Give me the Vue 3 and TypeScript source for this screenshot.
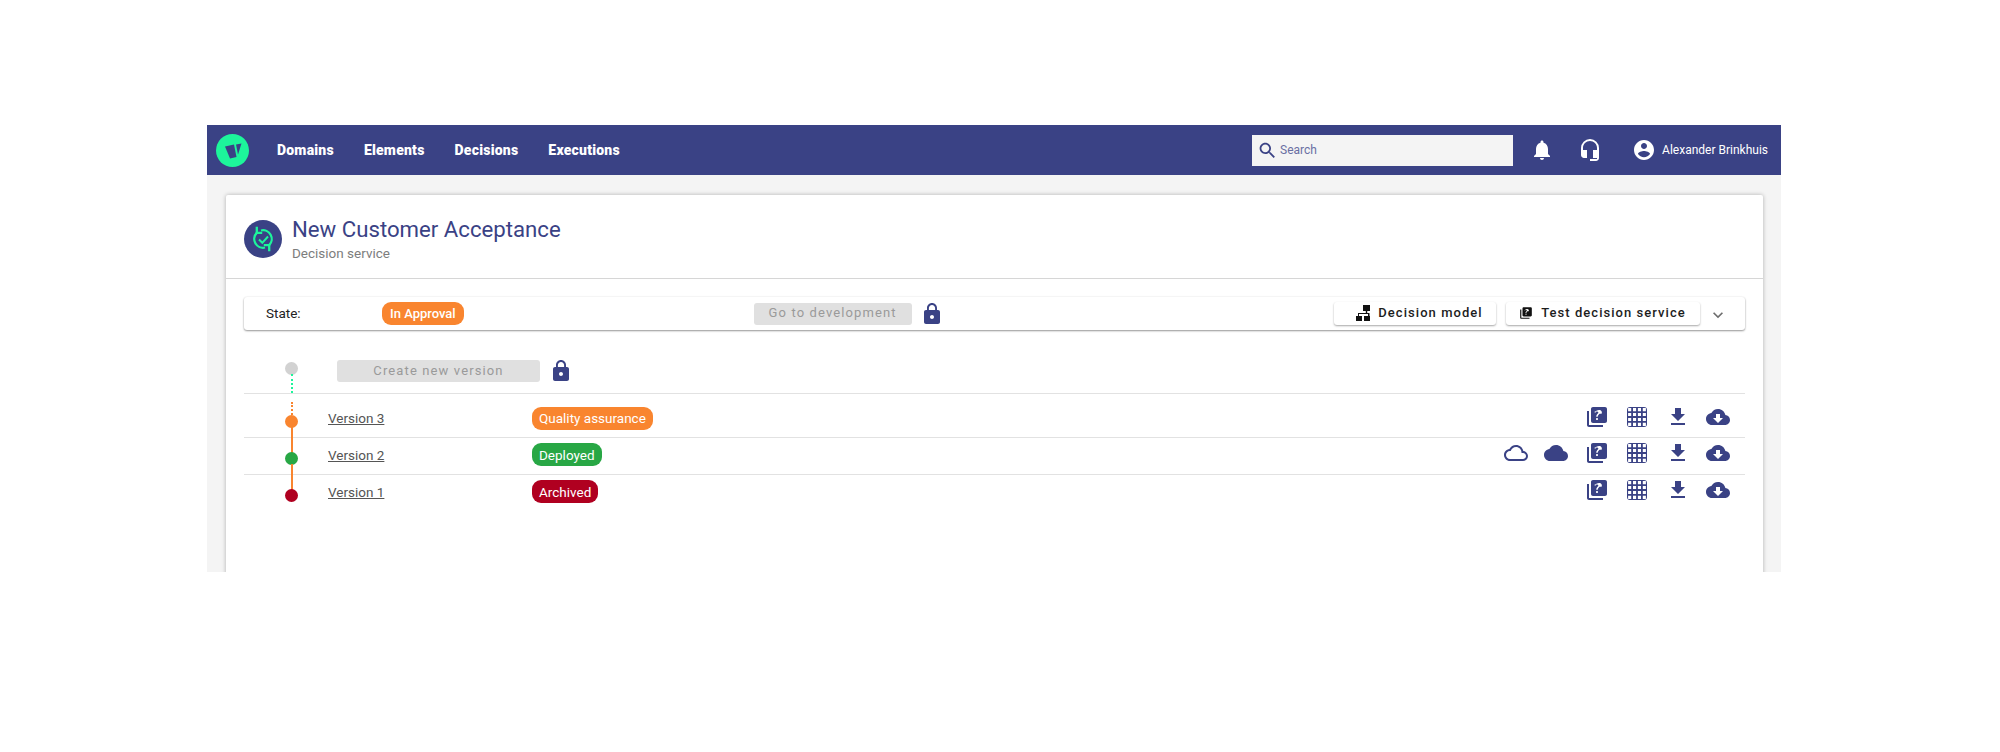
<script setup lang="ts">
const navItems: string[] = ['Domains', 'Elements', 'Decisions', 'Executions']

// outer rounded square with 4x4 cells cut out
function buildGrid(): string {
  let d = 'M5 2h14a3 3 0 0 1 3 3v14a3 3 0 0 1-3 3H5a3 3 0 0 1-3-3V5a3 3 0 0 1 3-3z'
  for (let row = 0; row < 4; row++) {
    for (let col = 0; col < 4; col++) {
      const x = 3.1 + col * 4.9
      const y = 3.1 + row * 4.9
      d += `M${x} ${y}h3.100v3.100h-3.100z`
    }
  }
  return d
}

const paths = {
  quiz: 'M4 6H2v14c0 1.1.9 2 2 2h14v-2H4V6zm16-4H8c-1.1 0-2 .9-2 2v12c0 1.1.9 2 2 2h12c1.1 0 2-.9 2-2V4c0-1.1-.9-2-2-2zm-7.990 13c-.59 0-1.050-.47-1.050-1.050 0-.59.47-1.040 1.050-1.040.59 0 1.040.45 1.040 1.040-.01.58-.45 1.050-1.040 1.050zm2.500-6.170c-.63.93-1.230 1.210-1.560 1.810-.13.24-.18.4-.18 1.180h-1.520c0-.41-.06-1.080.26-1.650.41-.73 1.180-1.160 1.630-1.800.48-.68.21-1.940-1.140-1.940-.88 0-1.320.67-1.500 1.230l-1.370-.57C11.510 5.960 12.520 5 13.990 5c1.230 0 2.080.56 2.510 1.260.37.61.58 1.730.01 2.570z',
  grid: buildGrid(),
  download: 'M19 9h-4V3H9v6H5l7 7 7-7zM5 18v2h14v-2H5z',
  cloudDownload: 'M19.350 10.040C18.670 6.590 15.640 4 12 4 9.110 4 6.600 5.640 5.350 8.040 2.340 8.360 0 10.910 0 14c0 3.310 2.690 6 6 6h13c2.760 0 5-2.240 5-5 0-2.640-2.050-4.780-4.650-4.960zM17 13l-5 5-5-5h3V9h4v4h3z',
  cloud: 'M19.350 10.040C18.670 6.590 15.640 4 12 4 9.110 4 6.600 5.640 5.350 8.040 2.340 8.360 0 10.910 0 14c0 3.310 2.690 6 6 6h13c2.760 0 5-2.240 5-5 0-2.640-2.050-4.780-4.650-4.960z',
  cloudOutline: 'M19.350 10.040C18.670 6.590 15.640 4 12 4 9.110 4 6.600 5.640 5.350 8.040 2.340 8.360 0 10.910 0 14c0 3.310 2.690 6 6 6h13c2.760 0 5-2.240 5-5 0-2.640-2.050-4.780-4.650-4.960zM19 18H6c-2.210 0-4-1.790-4-4s1.790-4 4-4h.71C7.370 7.690 9.480 6 12 6c3.040 0 5.500 2.460 5.500 5.500v.5H19c1.660 0 3 1.340 3 3s-1.340 3-3 3z'
}

const lockPath = 'M18 8h-1V6c0-2.760-2.240-5-5-5S7 3.240 7 6v2H6c-1.100 0-2 .9-2 2v10c0 1.100.9 2 2 2h12c1.100 0 2-.9 2-2V10c0-1.100-.9-2-2-2zm-6 9c-1.100 0-2-.9-2-2s.9-2 2-2 2 .9 2 2-.9 2-2 2zm3.100-9H8.900V6c0-1.710 1.390-3.100 3.100-3.100 1.710 0 3.100 1.390 3.100 3.100v2z'

interface Version {
  name: string
  status: string
  colour: string
  icons: (keyof typeof paths)[]
  cls: string
}

const versions: Version[] = [
  { name: 'Version 3', status: 'Quality assurance', colour: '#f9852f', icons: ['quiz', 'grid', 'download', 'cloudDownload'], cls: 'is-latest' },
  { name: 'Version 2', status: 'Deployed', colour: '#28a745', icons: ['cloudOutline', 'cloud', 'quiz', 'grid', 'download', 'cloudDownload'], cls: 'is-middle' },
  { name: 'Version 1', status: 'Archived', colour: '#b00020', icons: ['quiz', 'grid', 'download', 'cloudDownload'], cls: 'is-first' }
]
</script>

<template>
  <div class="page">
    <div class="frame">
      <header class="topbar">
        <svg class="logo" viewBox="0 0 33 33">
          <circle cx="16.500" cy="16.500" r="16.500" fill="#1df59b" />
          <polygon points="9,12.500 18,10.500 20.500,23 14,24.500" fill="#3a4285" />
          <polygon points="20,10.500 25.500,9.500 22,20.500" fill="#3a4285" />
        </svg>
        <nav class="nav">
          <a v-for="item in navItems" :key="item" class="nav-item">{{ item }}</a>
        </nav>
        <div class="search">
          <svg class="search-icon" viewBox="0 0 24 24"><path d="M15.500 14h-.79l-.28-.27C15.410 12.590 16 11.110 16 9.500 16 5.910 13.090 3 9.500 3S3 5.910 3 9.500 5.910 16 9.500 16c1.610 0 3.090-.59 4.230-1.570l.27.28v.79l5 4.990L20.490 19l-4.990-5zm-6 0C7.010 14 5 11.990 5 9.500S7.010 5 9.500 5 14 7.010 14 9.500 11.990 14 9.500 14z" /></svg>
          <span class="search-text">Search</span>
        </div>
        <svg class="bar-icon bell" viewBox="0 0 24 24"><path d="M12 22c1.100 0 2-.9 2-2h-4c0 1.100.89 2 2 2zm6-6v-5c0-3.070-1.640-5.640-4.500-6.320V4c0-.83-.67-1.500-1.500-1.500s-1.500.67-1.500 1.500v.68C7.630 5.360 6 7.920 6 11v5l-2 2v1h16v-1l-2-2z" /></svg>
        <svg class="bar-icon headset" viewBox="0 0 24 24"><path d="M12 1a9 9 0 0 0-9 9v7c0 1.660 1.340 3 3 3h3v-8H5v-2c0-3.870 3.130-7 7-7s7 3.130 7 7v2h-4v8h4v1h-7v2h6c1.660 0 3-1.340 3-3V10a9 9 0 0 0-9-9z" /></svg>
        <svg class="bar-icon account" viewBox="0 0 24 24"><path d="M12 2C6.480 2 2 6.480 2 12s4.480 10 10 10 10-4.480 10-10S17.520 2 12 2zm0 3c1.660 0 3 1.340 3 3s-1.340 3-3 3-3-1.340-3-3 1.340-3 3-3zm0 14.200c-2.500 0-4.710-1.280-6-3.220.03-1.990 4-3.080 6-3.080 1.990 0 5.970 1.090 6 3.080-1.290 1.940-3.500 3.220-6 3.220z" /></svg>
        <span class="user-name">Alexander Brinkhuis</span>
      </header>

      <main class="card">
        <div class="card-head">
          <svg class="service-icon" viewBox="0 0 38 38">
            <circle cx="19" cy="19" r="19" fill="#3a4285" />
            <g fill="none" stroke="#1df59b" stroke-width="2.300">
              <path d="M12.800 12.900A8.700 8.700 0 0 0 21 27.500" />
              <path d="M25.200 25.100A8.700 8.700 0 0 0 17 10.500" />
              <path d="M12.800 6.800v6h5.400" />
              <path d="M25.200 31.200v-6h-5.400" />
              <path d="M15 19.500l3.300 3.300 5.700-6.300" stroke-width="2" />
            </g>
          </svg>
          <div>
            <h1 class="title">New Customer Acceptance</h1>
            <div class="subtitle">Decision service</div>
          </div>
        </div>

        <div class="body">
          <section class="state-bar">
            <span class="state-label">State:</span>
            <span class="pill state-pill">In Approval</span>
            <button class="btn-disabled go-dev" disabled>Go to development</button>
            <svg class="lock" viewBox="0 0 24 24"><path :d="lockPath" /></svg>
            <div class="state-actions">
              <button class="btn-action model">
                <svg class="model-icon" viewBox="0 0 14 16"><path d="M7 0h7v6h-2.800v2H14v0h-.5v3H14v5H8v-5h4V9H3v2h3v5H0v-5h2V8h7.800V6H7z" /></svg>
                Decision model
              </button>
              <button class="btn-action test">
                <svg class="btn-icon" viewBox="0 0 24 24"><path :d="paths.quiz" /></svg>
                Test decision service
              </button>
              <svg class="chevron" viewBox="0 0 24 24"><path d="M16.590 8.590L12 13.170 7.410 8.590 6 10l6 6 6-6z" /></svg>
            </div>
          </section>

          <div class="row create-row">
            <div class="dot-cell"><span class="dot dot-new"></span></div>
            <button class="btn-disabled create" disabled>Create new version</button>
            <svg class="lock" viewBox="0 0 24 24"><path :d="lockPath" /></svg>
          </div>

          <div v-for="v in versions" :key="v.name" class="row" :class="v.cls">
            <div class="dot-cell"><span class="dot" :style="{ background: v.colour }"></span></div>
            <a class="version-link">{{ v.name }}</a>
            <span class="pill" :style="{ background: v.colour }">{{ v.status }}</span>
            <div class="row-icons">
              <svg v-for="icon in v.icons" :key="icon" class="row-icon" viewBox="0 0 24 24"><path :d="paths[icon]" fill-rule="evenodd" /></svg>
            </div>
          </div>
        </div>
      </main>
    </div>
  </div>
</template>

<style>
html, body {
  margin: 0;
  background: #fff;
}
</style>

<style scoped>
.page {
  width: 2000px;
  height: 752px;
  padding: 125px 0 0 207px;
  box-sizing: border-box;
  font-family: Roboto, "Liberation Sans", sans-serif;
  overflow: hidden;
}

.frame {
  width: 1574px;
  height: 447px;
  background: #f4f4f4;
  display: flex;
  flex-direction: column;
  overflow: hidden;
}

.topbar {
  height: 50px;
  flex: none;
  background: #3a4285;
  display: flex;
  align-items: center;
  color: #fff;
}

.logo {
  width: 33px;
  height: 33px;
  margin-left: 9px;
}

.nav {
  display: flex;
  margin-left: 28px;
  gap: 30px;
}

.nav-item {
  font-size: 14px;
  font-weight: 900;
  letter-spacing: 0.22px;
}

.search {
  width: 261px;
  height: 31px;
  margin-left: auto;
  background: #f4f4f4;
  display: flex;
  align-items: center;
}

.search-icon {
  width: 21px;
  height: 21px;
  margin-left: 5px;
  fill: #3a4285;
}

.search-text {
  margin-left: 2px;
  font-size: 12px;
  color: #6a6fa3;
}

.bar-icon {
  width: 24px;
  height: 24px;
  fill: #fff;
  flex: none;
}

.bell {
  margin-left: 17px;
}

.headset {
  margin-left: 24px;
}

.account {
  margin-left: 30px;
}

.user-name {
  margin-left: 6px;
  margin-right: 13px;
  font-size: 12px;
  white-space: nowrap;
}

.card {
  flex: none;
  height: 420px;
  margin: 20px 18px 0 19px;
  background: #fff;
  border-radius: 2px 2px 0 0;
  box-shadow: 0 0 4px rgba(0, 0, 0, 0.28);
}

.card-head {
  height: 84px;
  box-sizing: border-box;
  padding: 25px 0 0 18px;
  display: flex;
  gap: 10px;
  border-bottom: 1px solid #d6d6d6;
}

.service-icon {
  width: 38px;
  height: 38px;
  flex: none;
}

.title {
  margin: -6px 0 0;
  font-size: 22.200px;
  font-weight: 400;
  line-height: 30px;
  color: #3a4285;
}

.subtitle {
  margin-top: 1px;
  font-size: 13.500px;
  line-height: 17px;
  color: #7d7d7d;
}

.body {
  padding: 18px 18px 0;
}

.state-bar {
  height: 33px;
  margin-bottom: 1px;
  box-sizing: border-box;
  padding-left: 22px;
  display: flex;
  align-items: center;
  border-radius: 3px;
  box-shadow: 0 1px 2px rgba(0, 0, 0, 0.4), 0 0 2px rgba(0, 0, 0, 0.08);
}

.state-label {
  width: 116px;
  margin-top: -1px;
  font-size: 13.500px;
  color: #222;
}

.pill {
  display: inline-flex;
  align-items: center;
  height: 23px;
  padding: 0 7px;
  border-radius: 9px;
  color: #fff;
  font-size: 13.500px;
  white-space: nowrap;
  box-sizing: border-box;
}

.state-pill {
  background: #f9852f;
  padding: 0 8px;
  font-weight: 500;
  font-size: 13px;
}

.btn-disabled {
  height: 22px;
  padding: 0 0 2px;
  border: 0;
  border-radius: 3px;
  background: #e0e0e0;
  color: #9a9a9a;
  font-family: inherit;
  font-size: 13px;
  font-weight: 400;
  letter-spacing: 1.120px;
}

.go-dev {
  width: 158px;
  margin-left: 290px;
}

.lock {
  width: 24px;
  height: 24px;
  fill: #3a4285;
  flex: none;
  margin-left: 8px;
}

.state-actions {
  margin-left: auto;
  display: flex;
  align-items: center;
  gap: 10px;
}

.btn-action {
  height: 23px;
  display: flex;
  align-items: center;
  justify-content: center;
  padding: 0 0 2px;
  border: 0;
  border-radius: 3px;
  background: #fff;
  color: #1d1d1d;
  font-family: inherit;
  font-size: 13px;
  font-weight: 500;
  letter-spacing: 1.050px;
  box-shadow: 0 1px 2px rgba(0, 0, 0, 0.35);
}

.model {
  width: 162px;
  gap: 8px;
  padding-left: 9px;
}

.test {
  width: 194px;
  gap: 8px;
  padding-right: 1px;
}

.model-icon {
  width: 14px;
  height: 16px;
  fill: #111;
}

.btn-icon {
  width: 14px;
  height: 14px;
  fill: #111;
}

.chevron {
  width: 20px;
  height: 20px;
  margin: 2px 17px 0 -2px;
  fill: #6d6d6d;
}

.row {
  height: 37px;
  box-sizing: border-box;
  padding-bottom: 3px;
  display: flex;
  align-items: center;
  border-bottom: 1px solid #e2e2e2;
}

.create-row {
  height: 63px;
  padding-bottom: 0;
  align-items: flex-start;
  padding-top: 29px;
}

.create-row .lock {
  margin: -1px 0 0 9px;
}

.create {
  width: 203px;
}

.is-latest {
  height: 44px;
  padding-top: 6px;
  padding-bottom: 1px;
}

.is-first {
  border-bottom-color: transparent;
}

.dot-cell {
  width: 84px;
  flex: none;
  position: relative;
  height: 13px;
  margin-top: 7px;
}

.is-latest .dot-cell {
  margin-top: 6px;
}

.create-row .dot-cell {
  width: 93px;
  margin-top: 2px;
}

.dot {
  position: absolute;
  left: 41px;
  top: 0;
  width: 13px;
  height: 13px;
  border-radius: 50%;
  z-index: 1;
}

.dot-new {
  background: #d2d2d2;
}

/* timeline connectors between the dots */
.dot-new::after {
  content: "";
  position: absolute;
  left: 5.500px;
  top: 12px;
  height: 19px;
  border-left: 2px dotted #1df59b;
}

.is-latest .dot::before {
  content: "";
  position: absolute;
  left: 5.500px;
  top: -13px;
  height: 13px;
  border-left: 2px dotted #f9852f;
}

.is-latest .dot::after,
.is-middle .dot::after {
  content: "";
  position: absolute;
  left: 5.500px;
  top: 12px;
  height: 26px;
  border-left: 2px solid #f9852f;
}

.version-link {
  width: 204px;
  flex: none;
  font-size: 13.500px;
  color: #555;
  text-decoration: underline;
}

.row-icons {
  margin-left: auto;
  margin-right: 15px;
  margin-top: -3px;
  display: flex;
  gap: 16.500px;
}

.row-icon {
  width: 24px;
  height: 24px;
  fill: #3a4285;
}
</style>
